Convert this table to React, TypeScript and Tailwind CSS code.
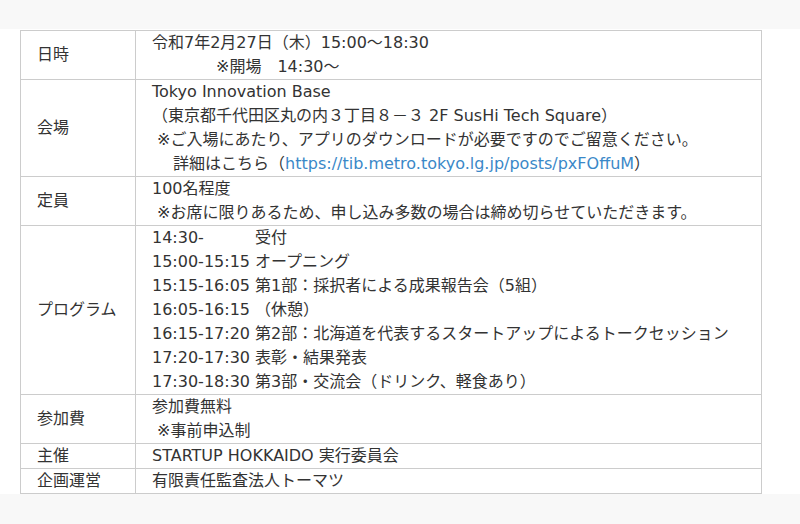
import React from "react";

const font = { fontFamily: '"DejaVu Sans", "Noto Sans CJK JP", sans-serif' };

function Row({ label, children }: { label: string; children: React.ReactNode }) {
  return (
    <tr>
      <td className="w-[115px] border border-[#cccccc] pl-4 align-middle">{label}</td>
      <td className="border border-[#cccccc] pl-4 align-top">{children}</td>
    </tr>
  );
}

const program: [string, string][] = [
  ["14:30-", "受付"],
  ["15:00-15:15", "オープニング"],
  ["15:15-16:05", "第1部：採択者による成果報告会（5組）"],
  ["16:05-16:15", "（休憩）"],
  ["16:15-17:20", "第2部：北海道を代表するスタートアップによるトークセッション"],
  ["17:20-17:30", "表彰・結果発表"],
  ["17:30-18:30", "第3部・交流会（ドリンク、軽食あり）"],
];

export default function App() {
  return (
    <div className="h-[524px] w-[800px] bg-[#f8f8f8] pt-[29px]" style={font}>
      <div className="bg-white pt-px pl-5 h-[465px]">
        <table className="w-[742px] border-collapse text-[16px] leading-6 text-[#333333]">
          <tbody>
            <Row label="日時">
              <div>令和7年2月27日（木）15:00〜18:30</div>
              <div className="whitespace-pre">{"　　　　※開場　14:30〜"}</div>
            </Row>
            <Row label="会場">
              <div>Tokyo Innovation Base</div>
              <div className="whitespace-pre">{"（東京都千代田区丸の内３丁目８－３ 2F SusHi Tech Square）"}</div>
              <div className="whitespace-pre">{" ※ご入場にあたり、アプリのダウンロードが必要ですのでご留意ください。"}</div>
              <div className="whitespace-pre">
                {"　 詳細はこちら（"}
                <span className="text-[#3a88c8]">https://tib.metro.tokyo.lg.jp/posts/pxFOffuM</span>
                {"）"}
              </div>
            </Row>
            <Row label="定員">
              <div>100名程度</div>
              <div className="whitespace-pre">{" ※お席に限りあるため、申し込み多数の場合は締め切らせていただきます。"}</div>
            </Row>
            <Row label="プログラム">
              {program.map(([t, d]) => (
                <div key={t} className="flex">
                  <span className="w-[103px] shrink-0">{t}</span>
                  <span>{d}</span>
                </div>
              ))}
            </Row>
            <Row label="参加費">
              <div>参加費無料</div>
              <div className="whitespace-pre">{" ※事前申込制"}</div>
            </Row>
            <Row label="主催">
              <div>STARTUP HOKKAIDO 実行委員会</div>
            </Row>
            <Row label="企画運営">
              <div>有限責任監査法人トーマツ</div>
            </Row>
          </tbody>
        </table>
      </div>
    </div>
  );
}
